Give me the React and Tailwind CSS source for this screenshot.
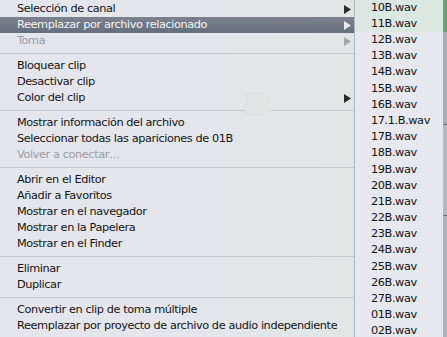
import React from 'react';

const mainItems = [
  { label: 'Selección de canal', arrow: true },
  { label: 'Reemplazar por archivo relacionado', arrow: true, active: true },
  { label: 'Toma', arrow: true, disabled: true },
  { sep: true },
  { label: 'Bloquear clip' },
  { label: 'Desactivar clip' },
  { label: 'Color del clip', arrow: true },
  { sep: true },
  { label: 'Mostrar información del archivo' },
  { label: 'Seleccionar todas las apariciones de 01B' },
  { label: 'Volver a conectar…', disabled: true },
  { sep: true },
  { label: 'Abrir en el Editor' },
  { label: 'Añadir a Favoritos' },
  { label: 'Mostrar en el navegador' },
  { label: 'Mostrar en la Papelera' },
  { label: 'Mostrar en el Finder' },
  { sep: true },
  { label: 'Eliminar' },
  { label: 'Duplicar' },
  { sep: true },
  { label: 'Convertir en clip de toma múltiple' },
  { label: 'Reemplazar por proyecto de archivo de audio independiente' },
];

const files = [
  '10B.wav', '11B.wav', '12B.wav', '13B.wav', '14B.wav', '15B.wav', '16B.wav',
  '17.1.B.wav', '17B.wav', '18B.wav', '19B.wav', '20B.wav', '21B.wav', '22B.wav',
  '23B.wav', '24B.wav', '25B.wav', '26B.wav', '27B.wav', '01B.wav', '02B.wav',
];

function Arrow({ color }) {
  return (
    <svg width="7" height="9" viewBox="0 0 7 9" className="shrink-0">
      <path d="M0 0 L7 4.5 L0 9 Z" fill={color} />
    </svg>
  );
}

export default function App() {
  return (
    <div
      className="w-[447px] h-[337px] overflow-hidden flex bg-[#e4e6ec] text-[11.3px] tracking-[-0.4px] text-[#141414]"
      style={{ fontFamily: '"DejaVu Sans", sans-serif' }}
    >
      {/* main context menu */}
      <div className="relative w-[355px] shrink-0 flex flex-col pt-px border-r border-[#b3b6bd] bg-gradient-to-r from-[#e4e6ec] via-[#e4e6ec] to-[#e0e6e4]">
        {/* faint clip showing through the translucent menu */}
        <div className="absolute left-[245px] top-[92px] w-[26px] h-[24px] bg-[#dee6e4]" />
        {mainItems.map((it, i) =>
          it.sep ? (
            <div key={i} className="h-[9px] flex items-center">
              <div className="w-full h-px bg-[#c6c8ce]" />
            </div>
          ) : (
            <div
              key={i}
              className={
                'relative h-4 flex items-center justify-between pl-[17px] pr-[3px] ' +
                (it.active
                  ? 'bg-gradient-to-b from-[#7b8391] to-[#656e7c] text-[#f4f5f7]'
                  : it.disabled
                  ? 'text-[#9a9da4]'
                  : '')
              }
            >
              <span className="whitespace-nowrap">{it.label}</span>
              {it.arrow && (
                <Arrow color={it.active ? '#e8eaee' : it.disabled ? '#a3a6ad' : '#2a2a2a'} />
              )}
            </div>
          )
        )}
      </div>

      {/* submenu */}
      <div className="w-[88px] shrink-0 flex flex-col bg-[#e6e8ee] pl-[16px]">
        {files.map((f, i) => (
          <div
            key={f}
            className={'h-[16.2px] flex items-center whitespace-nowrap ' + (i < 2 ? '-ml-[16px] pl-[16px] bg-[#dbe7e1]' : '')}
          >
            {f}
          </div>
        ))}
      </div>

      {/* window edge behind the menus */}
      <div className="flex-1 flex flex-col">
        <div className="h-[32px] bg-[#6aa07a]" />
        <div className="h-[92px] bg-[#a9acb2]" />
        <div className="h-px bg-[#6e7178]" />
        <div className="h-[90px] bg-[#b4b7bd]" />
        <div className="h-px bg-[#6e7178]" />
        <div className="flex-1 bg-[#aeb1b7]" />
      </div>
    </div>
  );
}
